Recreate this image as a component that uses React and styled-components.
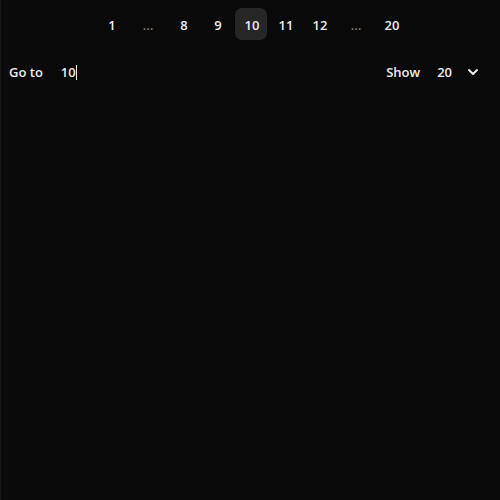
import React, { useState } from 'react'
import styled, { createGlobalStyle } from 'styled-components'
import { ChevronDown } from 'lucide-react'

const GlobalStyle = createGlobalStyle`
  * {
    margin: 0;
    padding: 0;
    box-sizing: border-box;
  }
  body {
    background: #090909;
    font-family: "Open Sans", "Noto Sans", sans-serif;
  }
`

const Page = styled.div`
  min-height: 500px;
  background: #090909;
  border-left: 1px solid #151515;
  padding-top: 8px;
  display: flex;
  flex-direction: column;
  gap: 16px;
`

const Pager = styled.nav`
  display: flex;
  justify-content: center;
  gap: 2px;
  padding-left: 1px;
`

const PageButton = styled.button`
  width: ${p => (p.$gap ? '36px' : '32px')};
  height: 32px;
  padding: 2px 0 0 2px;
  border: none;
  border-radius: 7px;
  background: ${p => (p.$active ? '#262626' : 'transparent')};
  color: ${p => (p.$gap ? '#7c7c7c' : '#ececec')};
  font-family: inherit;
  font-size: 13px;
  font-weight: 600;
  display: flex;
  align-items: center;
  justify-content: center;
  cursor: pointer;
`

const Controls = styled.div`
  display: flex;
  justify-content: space-between;
  align-items: center;
  height: 32px;
  padding: 0 19px 0 8px;
`

const Field = styled.label`
  display: flex;
  align-items: center;
  color: #ececec;
  font-size: 13px;
  font-weight: 600;
`

const GotoInput = styled.input`
  width: 15px;
  margin-left: 18px;
  background: transparent;
  border: none;
  outline: none;
  color: #ececec;
  font-family: inherit;
  font-size: 13px;
  font-weight: 600;
  caret-color: #ececec;
`

const Caret = styled.span`
  width: 1px;
  height: 15px;
  background: #ececec;
`

const Select = styled.div`
  display: flex;
  align-items: center;
  margin-left: 17px;
  gap: 13px;
  color: #ececec;
`

const pages = ['1', '…', '8', '9', '10', '11', '12', '…', '20']

export default function App() {
  const [current, setCurrent] = useState('10')
  return (
    <Page>
      <GlobalStyle />
      <Pager>
        {pages.map((p, i) => (
          <PageButton
            key={i}
            $gap={p === '…'}
            $active={p === current}
            onClick={() => p !== '…' && setCurrent(p)}
          >
            {p}
          </PageButton>
        ))}
      </Pager>
      <Controls>
        <Field>
          Go to
          <GotoInput defaultValue="10" />
          <Caret />
        </Field>
        <Field>
          Show
          <Select>
            20
            <ChevronDown size={16} strokeWidth={3} />
          </Select>
        </Field>
      </Controls>
    </Page>
  )
}
